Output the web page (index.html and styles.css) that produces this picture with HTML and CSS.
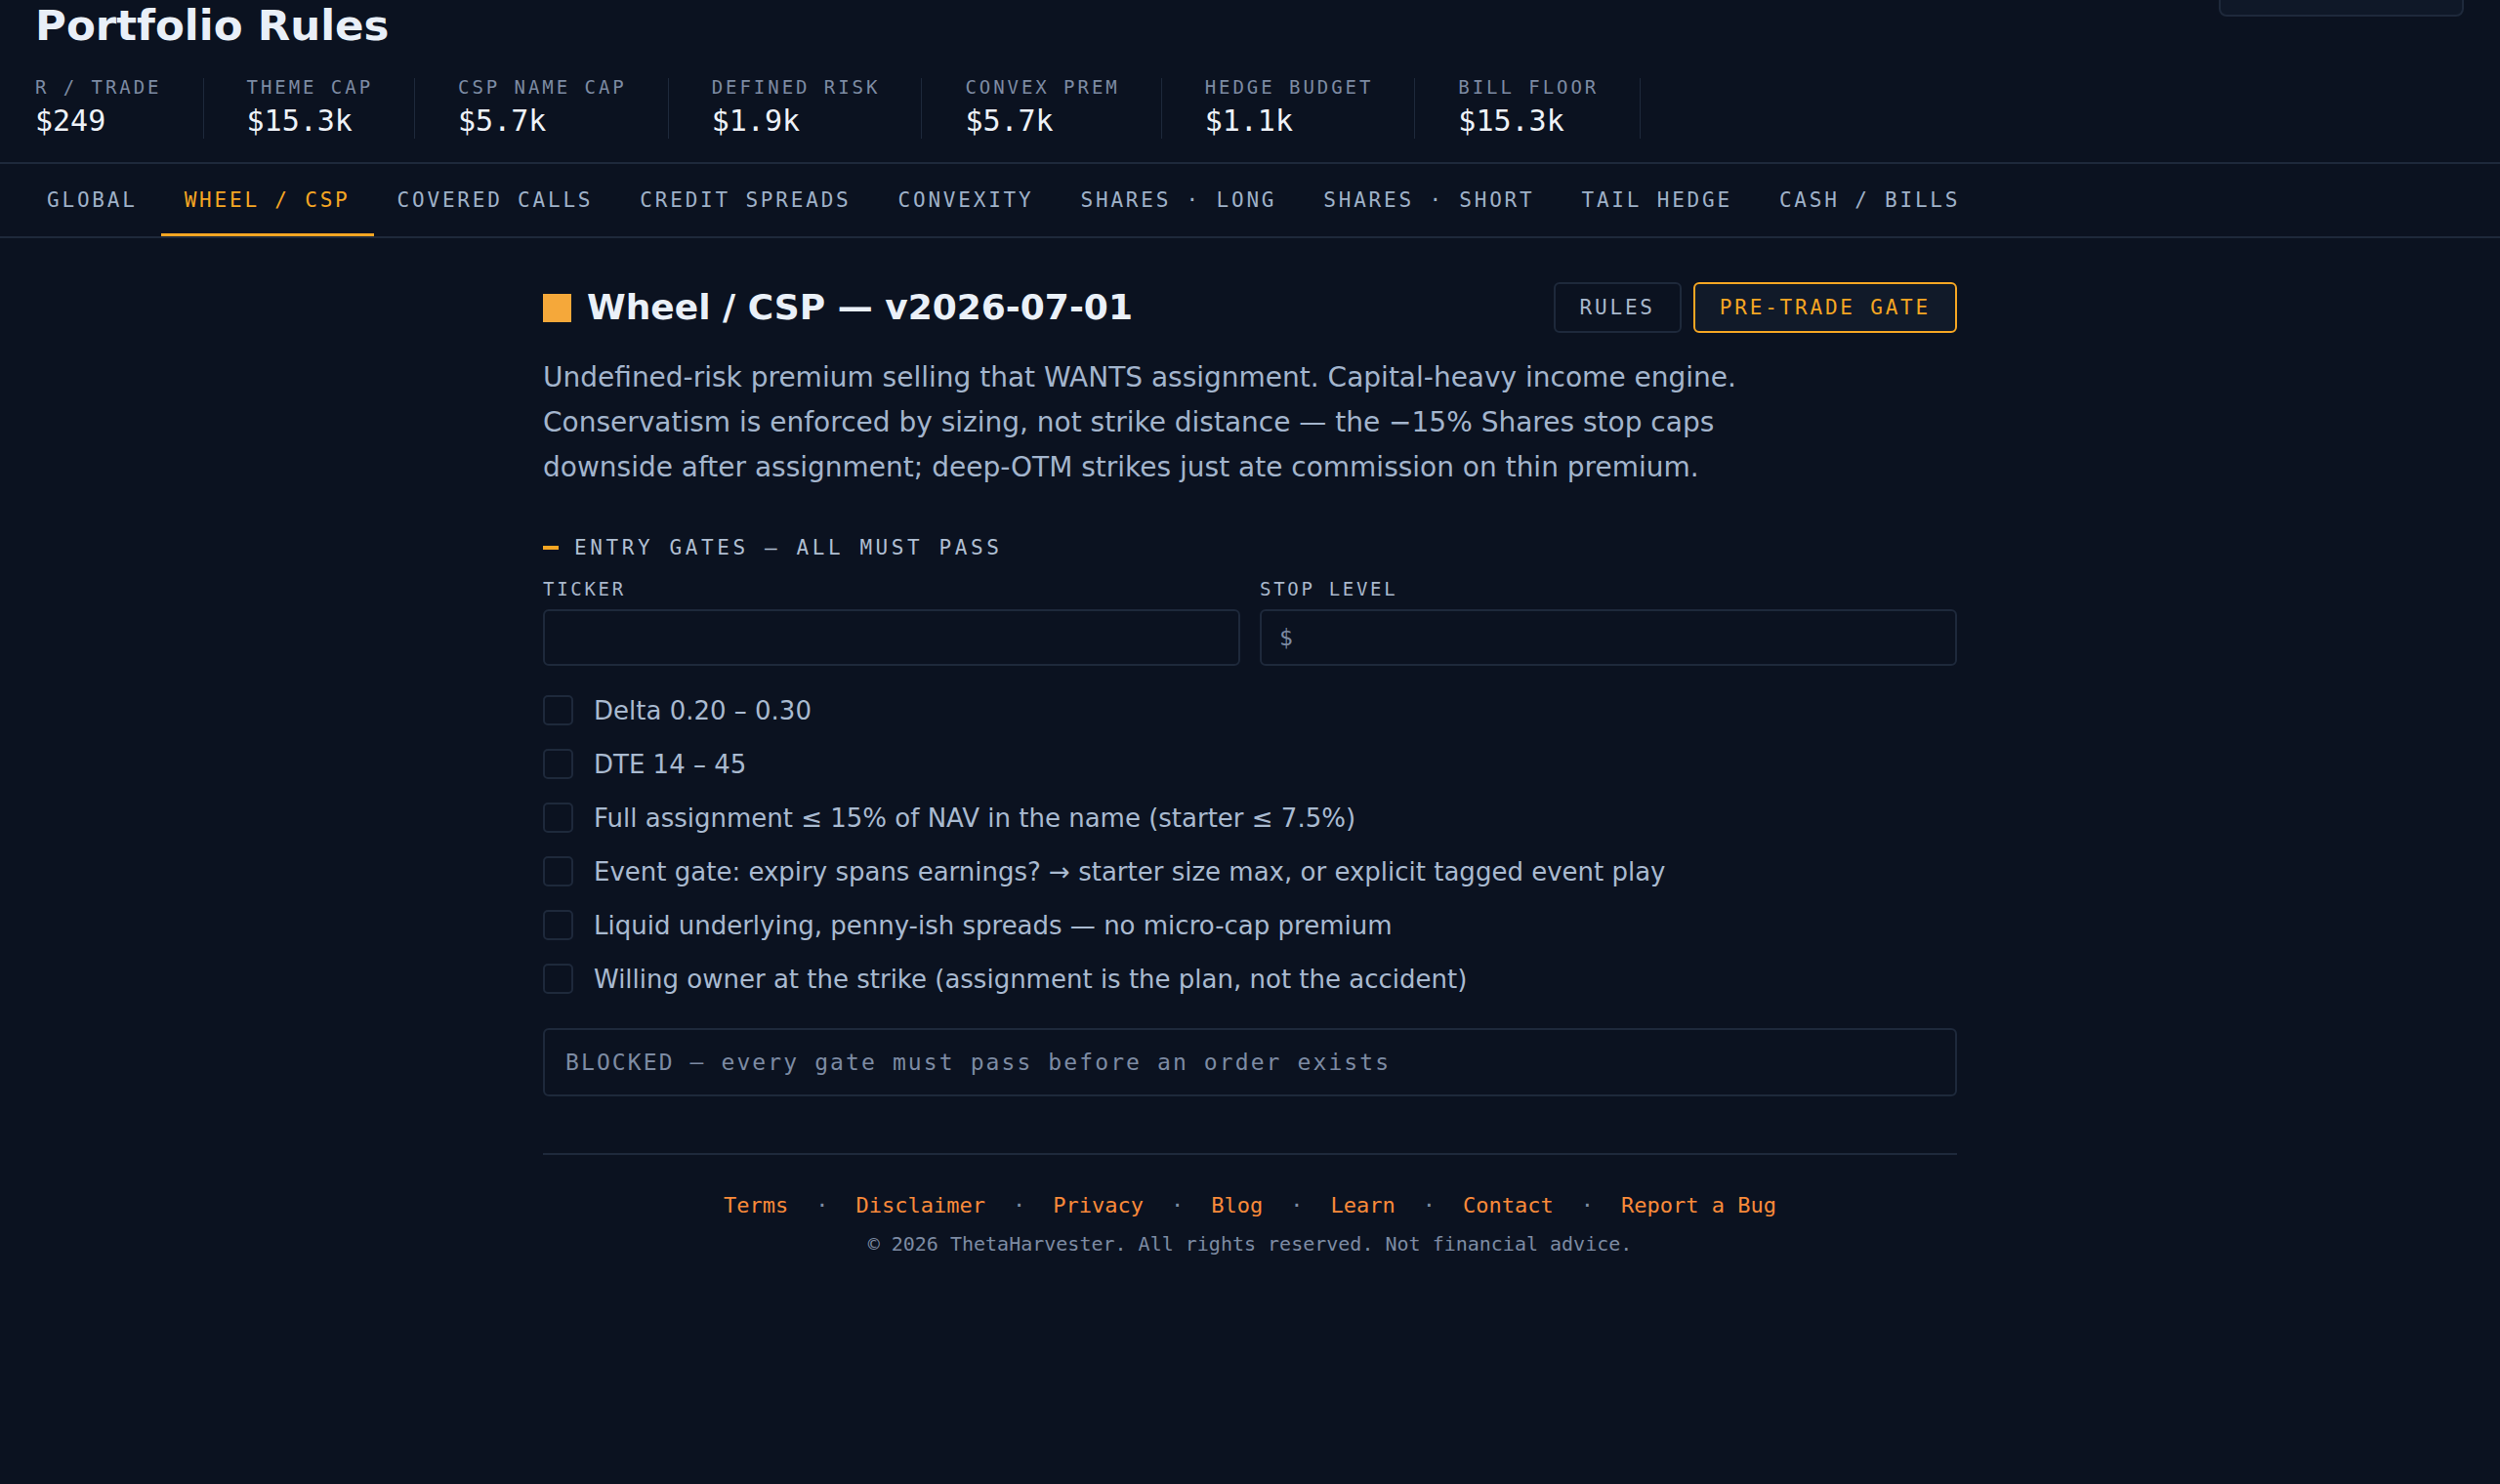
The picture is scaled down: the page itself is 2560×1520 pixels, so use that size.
FILE: index.html
```html
<!DOCTYPE html>
<html lang="en">
<head>
    <meta charset="UTF-8">
    <meta name="viewport" content="width=device-width, initial-scale=1.0">
    <title>Portfolio Rules</title>
    <link rel="stylesheet" href="styles.css">
</head>
<body>
<div class="page">

<header class="masthead">
    <div class="masthead-top">
        <h1>Portfolio Rules</h1>
        <div class="search">
            <svg width="18" height="18" viewBox="0 0 18 18" fill="none" stroke="#7d8ba3" stroke-width="2"><circle cx="7.5" cy="7.5" r="5.5"/><path d="M11.5 11.5 16 16"/></svg>
        </div>
    </div>
    <div class="stats">
        <div class="stat"><div class="stat-label">R / TRADE</div><div class="stat-value">$249</div></div>
        <div class="stat"><div class="stat-label">THEME CAP</div><div class="stat-value">$15.3k</div></div>
        <div class="stat"><div class="stat-label">CSP NAME CAP</div><div class="stat-value">$5.7k</div></div>
        <div class="stat"><div class="stat-label">DEFINED RISK</div><div class="stat-value">$1.9k</div></div>
        <div class="stat"><div class="stat-label">CONVEX PREM</div><div class="stat-value">$5.7k</div></div>
        <div class="stat"><div class="stat-label">HEDGE BUDGET</div><div class="stat-value">$1.1k</div></div>
        <div class="stat"><div class="stat-label">BILL FLOOR</div><div class="stat-value">$15.3k</div></div>
    </div>
</header>

<nav class="tabs">
    <a class="tab" href="#">GLOBAL</a>
    <a class="tab active" href="#">WHEEL / CSP</a>
    <a class="tab" href="#">COVERED CALLS</a>
    <a class="tab" href="#">CREDIT SPREADS</a>
    <a class="tab" href="#">CONVEXITY</a>
    <a class="tab" href="#">SHARES · LONG</a>
    <a class="tab" href="#">SHARES · SHORT</a>
    <a class="tab" href="#">TAIL HEDGE</a>
    <a class="tab" href="#">CASH / BILLS</a>
</nav>

<main class="content">
    <div class="rule-head">
        <h2><span class="swatch"></span>Wheel / CSP — v2026-07-01</h2>
        <div class="head-actions">
            <button type="button" class="btn">RULES</button>
            <button type="button" class="btn btn-active">PRE-TRADE GATE</button>
        </div>
    </div>

    <p class="rule-desc">Undefined-risk premium selling that WANTS assignment. Capital-heavy income engine. Conservatism is enforced by sizing, not strike distance — the −15% Shares stop caps downside after assignment; deep-OTM strikes just ate commission on thin premium.</p>

    <section class="gates">
        <h3 class="section-label">ENTRY GATES — ALL MUST PASS</h3>

        <div class="fields">
            <div class="field">
                <label for="ticker">TICKER</label>
                <input type="text" id="ticker">
            </div>
            <div class="field">
                <label for="stop">STOP LEVEL</label>
                <input type="text" id="stop" placeholder="$">
            </div>
        </div>

        <ul class="checklist">
            <li><input type="checkbox" id="g1"><label for="g1">Delta 0.20 – 0.30</label></li>
            <li><input type="checkbox" id="g2"><label for="g2">DTE 14 – 45</label></li>
            <li><input type="checkbox" id="g3"><label for="g3">Full assignment ≤ 15% of NAV in the name (starter ≤ 7.5%)</label></li>
            <li><input type="checkbox" id="g4"><label for="g4">Event gate: expiry spans earnings? → starter size max, or explicit tagged event play</label></li>
            <li><input type="checkbox" id="g5"><label for="g5">Liquid underlying, penny-ish spreads — no micro-cap premium</label></li>
            <li><input type="checkbox" id="g6"><label for="g6">Willing owner at the strike (assignment is the plan, not the accident)</label></li>
        </ul>

        <div class="verdict">BLOCKED — every gate must pass before an order exists</div>
    </section>

    <footer class="site-footer">
        <div class="footer-links">
            <a href="#">Terms</a><span class="dot">·</span>
            <a href="#">Disclaimer</a><span class="dot">·</span>
            <a href="#">Privacy</a><span class="dot">·</span>
            <a href="#">Blog</a><span class="dot">·</span>
            <a href="#">Learn</a><span class="dot">·</span>
            <a href="#">Contact</a><span class="dot">·</span>
            <a href="#">Report a Bug</a>
        </div>
        <p class="copyright">© 2026 ThetaHarvester. All rights reserved. Not financial advice.</p>
    </footer>
</main>

</div>
</body>
</html>
```

FILE: styles.css
```css
* {
    box-sizing: border-box;
}
body {
    margin: 0;
    background: #0b1220;
    color: #a9b8cc;
    font-family: "DejaVu Sans", "Noto Sans", sans-serif;
}
.page {
    margin-top: -40px;
    min-height: 1560px;
}
.masthead {
    padding: 0 37px 24px 36px;
}
.masthead-top {
    display: flex;
    justify-content: space-between;
    align-items: flex-start;
}
.masthead h1 {
    margin: 40px 0 0;
    font-size: 43.5px;
    line-height: 52px;
    font-weight: bold;
    color: #e9eff8;
}
.search {
    margin-top: 5px;
    width: 251px;
    height: 52px;
    display: flex;
    align-items: center;
    padding: 0 30px;
    background: #0f1828;
    border: 2px solid #1e293b;
    border-radius: 8px;
}
.stats {
    display: flex;
    margin-top: 28px;
}
.stat {
    padding: 0 42px 0 44px;
    border-right: 1px solid #1e293b;
}
.stat:first-child {
    padding-left: 0;
}
.stat-label {
    font-family: "DejaVu Sans Mono", monospace;
    font-size: 19px;
    line-height: 18px;
    letter-spacing: 2.95px;
    color: #7d8ba3;
    white-space: nowrap;
}
.stat-value {
    margin-top: 8px;
    font-family: "DejaVu Sans Mono", monospace;
    font-size: 30px;
    line-height: 36px;
    color: #eef2f8;
}

.tabs {
    display: flex;
    padding-left: 24px;
    border-top: 2px solid #1e293b;
    border-bottom: 2px solid #1e293b;
}
.tab {
    padding: 25px 24px 22px;
    border-bottom: 3px solid transparent;
    font-family: "DejaVu Sans Mono", monospace;
    font-size: 21px;
    line-height: 24px;
    letter-spacing: 2.8px;
    color: #9fb1c8;
    text-decoration: none;
    white-space: nowrap;
}
.tab.active {
    color: #f5a623;
    border-bottom-color: #f5a623;
}

.content {
    width: 1448px;
    margin: 0 auto;
    padding-top: 45px;
}
.rule-head {
    display: flex;
    justify-content: space-between;
    align-items: center;
}
.rule-head h2 {
    display: flex;
    align-items: center;
    gap: 16px;
    margin: 0;
    font-size: 36px;
    line-height: 1.2;
    color: #eaf0f8;
}
.swatch {
    width: 29px;
    height: 29px;
    background: #f5a83a;
}
.head-actions {
    display: flex;
    gap: 12px;
}
.btn {
    padding: 12px 25px;
    background: transparent;
    border: 2px solid #1e293b;
    border-radius: 6px;
    font-family: "DejaVu Sans Mono", monospace;
    font-size: 21px;
    line-height: 24px;
    letter-spacing: 2.8px;
    color: #a9b8cc;
    cursor: pointer;
}
.btn-active {
    background: #111a29;
    border-color: #f5a623;
    color: #f5a623;
}
.rule-desc {
    max-width: 1280px;
    margin: 23px 0 0;
    font-size: 28px;
    line-height: 46px;
    color: #a3b5cd;
}

.section-label {
    display: flex;
    align-items: center;
    gap: 16px;
    margin: 47px 0 0;
    font-family: "DejaVu Sans Mono", monospace;
    font-size: 21px;
    line-height: 24px;
    font-weight: normal;
    letter-spacing: 3.6px;
    color: #b0bfd2;
}
.section-label::before {
    content: "";
    width: 16px;
    height: 4px;
    background: #f5a623;
}
.fields {
    display: grid;
    grid-template-columns: 1fr 1fr;
    gap: 20px;
    margin-top: 20px;
}
.field label {
    display: block;
    margin-bottom: 9px;
    font-family: "DejaVu Sans Mono", monospace;
    font-size: 19px;
    line-height: 21.6px;
    letter-spacing: 2.7px;
    color: #a9b8cc;
}
.field input {
    display: block;
    width: 100%;
    height: 58px;
    padding: 0 18px;
    background: #0b1220;
    border: 2px solid #1e293b;
    border-radius: 6px;
    font-family: "DejaVu Sans Mono", monospace;
    font-size: 23px;
    color: #dfe6ef;
    outline: none;
}
.field input::placeholder {
    color: #7d8ba3;
}

.checklist {
    list-style: none;
    margin: 29px 0 0;
    padding: 0;
    display: flex;
    flex-direction: column;
    gap: 21px;
}
.checklist li {
    display: flex;
    align-items: center;
    gap: 21px;
}
.checklist input {
    appearance: none;
    flex: none;
    width: 31px;
    height: 31px;
    margin: 0;
    border: 2px solid #1e293b;
    border-radius: 5px;
    background: transparent;
}
.checklist label {
    font-size: 26px;
    line-height: 34px;
    color: #a9bad0;
}
.verdict {
    margin-top: 33px;
    padding: 20px 21px;
    border: 2px solid #1e293b;
    border-radius: 6px;
    font-family: "DejaVu Sans Mono", monospace;
    font-size: 23px;
    line-height: 26px;
    letter-spacing: 2.1px;
    color: #7d8ba3;
}

.site-footer {
    margin-top: 58px;
    padding-top: 40px;
    border-top: 2px solid #1e293b;
    text-align: center;
    font-family: "DejaVu Sans Mono", monospace;
}
.footer-links {
    display: flex;
    justify-content: center;
    font-size: 22px;
    line-height: 24px;
}
.footer-links a {
    color: #f98a3a;
    text-decoration: none;
}
.dot {
    margin: 0 28px;
    color: #7d8ba3;
}
.copyright {
    margin: 15px 0 0;
    font-size: 20px;
    line-height: 24px;
    color: #7d8ba3;
}
```
